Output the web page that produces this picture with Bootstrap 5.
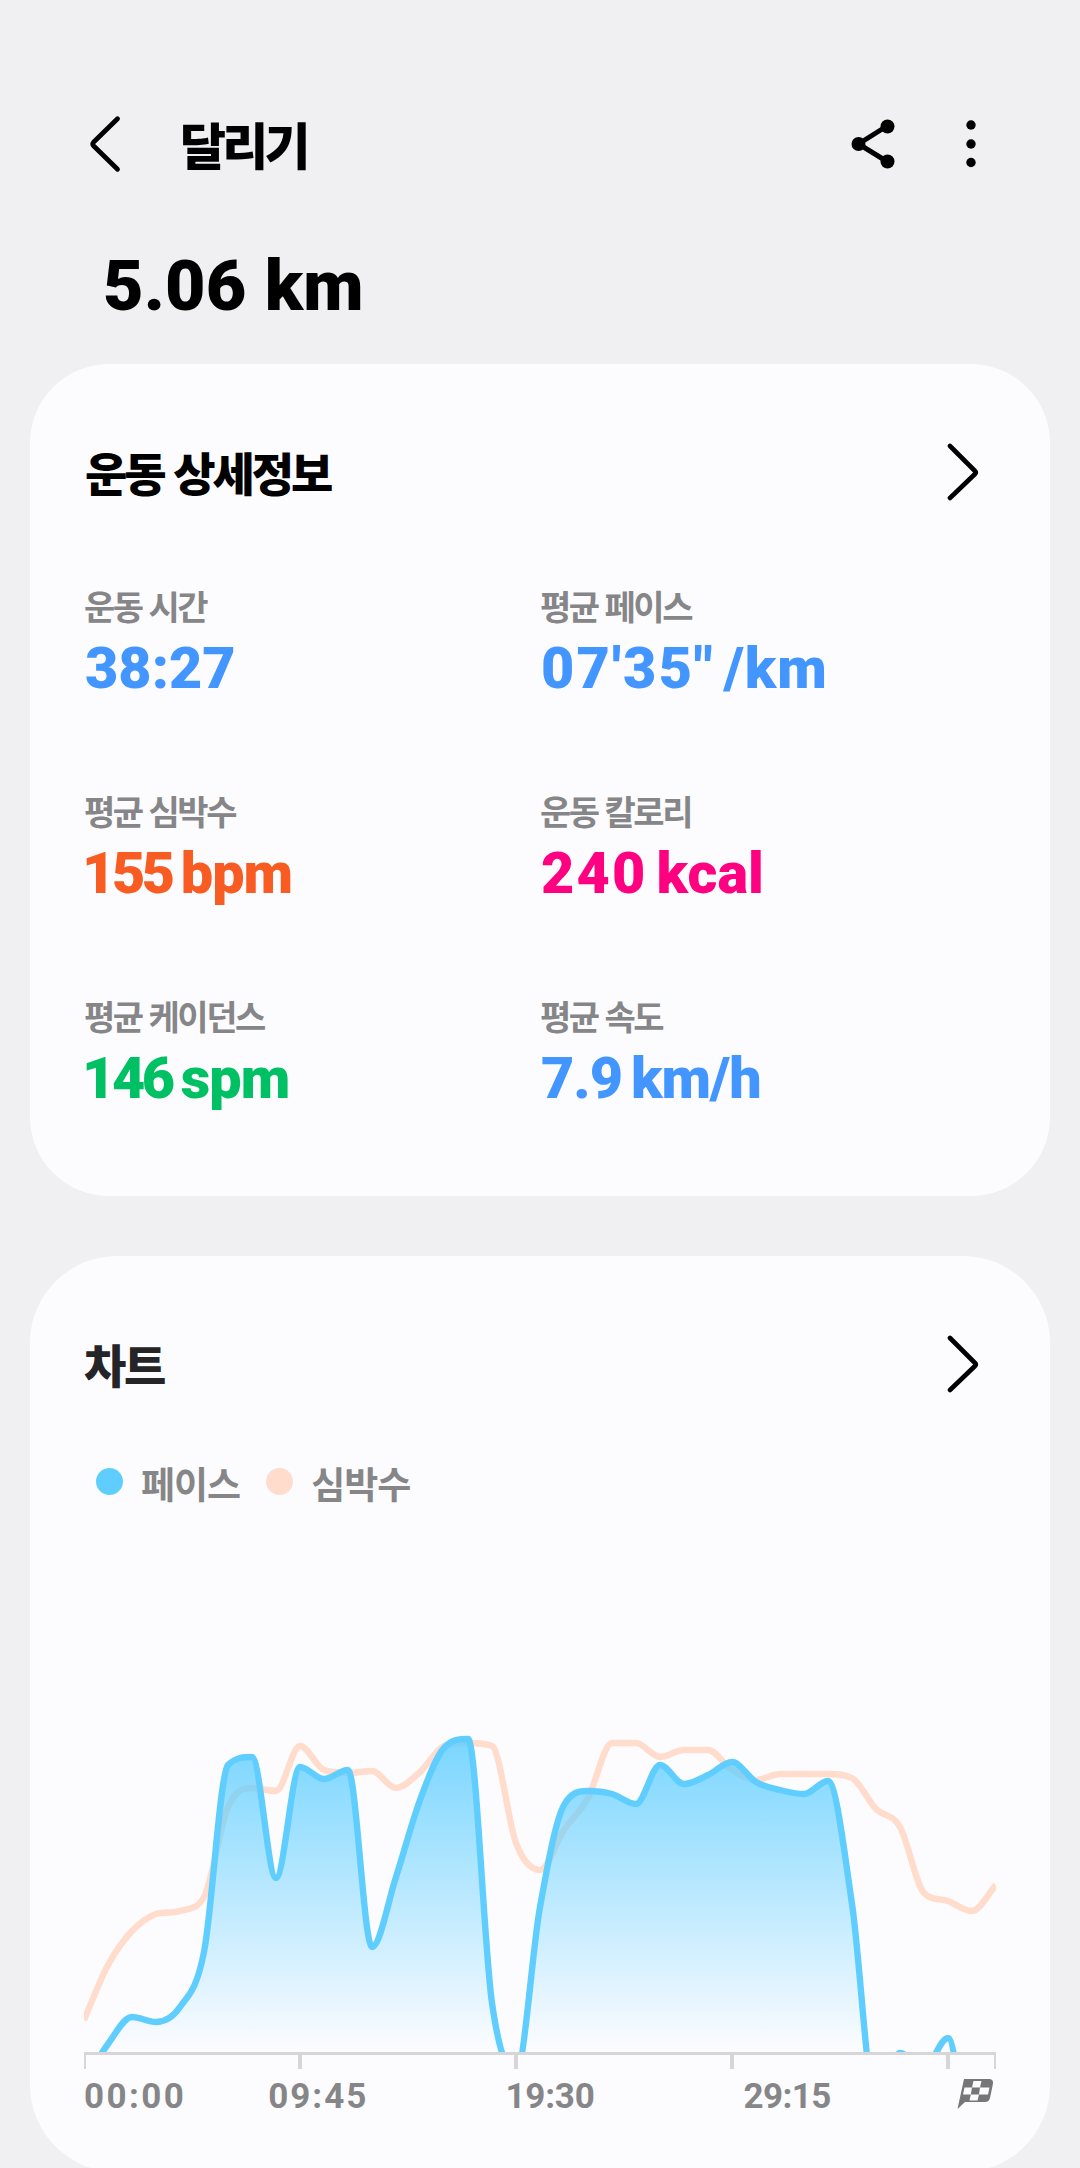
<!DOCTYPE html>
<html lang="ko">
<head>
<meta charset="utf-8">
<meta name="viewport" content="width=device-width, initial-scale=1">
<title>달리기</title>
<link href="https://cdn.jsdelivr.net/npm/bootstrap@5.3.0/dist/css/bootstrap.min.css" rel="stylesheet">
<style>
  html, body { height: 2168px; overflow: hidden; }
  body { background: #f0f0f3; color: #000; font-family: "Noto Sans CJK KR", sans-serif; }
  .screen { width: 1080px; height: 2168px; overflow: hidden; padding: 0 30px; }
  svg { display: block; flex: none; }

  .topbar { height: 88px; margin-top: 100px; padding: 0 69px 0 56px; }
  .topbar h1 { font-size: 50px; font-weight: 900; line-height: 60px; letter-spacing: -3.7px; margin: 0 0 2px 54px; }
  .share-icon { margin-right: 64px; }

  .num { font-family: Roboto, "Noto Sans CJK KR", sans-serif; font-weight: 900; white-space: nowrap; }
  .distance { height: 176px; padding: 63px 0 0 73px; font-size: 70px; line-height: 70px; letter-spacing: .1px; word-spacing: 1px; }

  .panel { background: #fcfcff; border: 0; }
  .panel-details { height: 832px; border-radius: 79px; padding: 77px 55px 0; }
  .panel-chart { height: 916px; border-radius: 87px; padding: 77px 54px 0; margin-top: 60px; }
  .panel h2 { font-size: 46px; font-weight: 900; line-height: 60px; letter-spacing: -3.1px; margin: 0; }
  .panel-head { height: 60px; padding-right: 14px; }
  .panel-chart .panel-head { padding-right: 15px; }
  .panel-chart h2 { color: #252527; letter-spacing: -2.4px; }

  .stats { margin: 85px -2px 0 0; row-gap: 105px; }
  .stat { height: 100px; width: 50%; }
  .stat-name { font-size: 34px; font-weight: 700; line-height: 40px; letter-spacing: -2.5px; color: #868688; margin-left: -1px; }
  .stat-value { font-size: 57.5px; line-height: 60px; gap: 9px; margin-top: 13px; }
  .ls-wide { letter-spacing: 2.2px; }
  .ls-unit { letter-spacing: 1px; }
  .ls-tight { letter-spacing: -3.4px; margin-left: -3px; }
  .ls-snug { letter-spacing: -1px; }
  .c-blue { color: #4396ff; } .c-orange { color: #f85c22; } .c-pink { color: #ff0080; } .c-green { color: #00c064; }

  .legend { margin-top: 61px; padding-left: 12px; height: 54px; font-size: 37px; font-weight: 700; line-height: 54px; letter-spacing: -1px; color: #868688; }
  .legend-text { margin: 3px 26px 0 18px; }
  .dot { width: 27px; height: 27px; border-radius: 50%; }
  .dot-pace { background: #5fceff; } .dot-heart { background: #ffdccb; }
  .plot { margin-top: 142px; }
  .axis-labels { height: 60px; color: #868688; font-size: 35px; line-height: 56px; letter-spacing: 2.4px; }
  .axis-labels .num { font-weight: 700; }
  .t1 { margin-left: 82px; letter-spacing: 2px; } .t2 { margin-left: 137px; letter-spacing: -.2px; } .t3 { margin-left: 149px; letter-spacing: -.6px; }
</style>
</head>
<body>
<main class="screen d-flex flex-column">
  <header class="topbar d-flex align-items-center flex-shrink-0">
    <svg width="40" height="60" viewBox="0 0 40 60" fill="none" stroke="#000" stroke-width="4.8" stroke-linecap="round" stroke-linejoin="round"><path d="M31.5 4.700L7.500 28.300Q6 30 7.500 31.700L31.500 55.300" /></svg>
    <h1>달리기</h1>
    <svg class="share-icon ms-auto" width="46" height="50" viewBox="0 0 46 50"><path d="M36 7L7.500 25L36 42.500" fill="none" stroke="#000" stroke-width="5"/><circle cx="7.500" cy="25" r="7"/><circle cx="36.500" cy="7.500" r="7"/><circle cx="36.500" cy="42.500" r="7"/></svg>
    <svg width="20" height="50" viewBox="0 0 20 50"><circle cx="10" cy="6" r="4.700"/><circle cx="10" cy="25" r="4.700"/><circle cx="10" cy="43.500" r="4.700"/></svg>
  </header>
  <div class="distance num flex-shrink-0">5.06 km</div>

  <section class="card panel panel-details flex-shrink-0">
    <div class="panel-head d-flex align-items-center justify-content-between">
      <h2>운동 상세정보</h2>
      <svg width="34" height="60" viewBox="0 0 34 60" fill="none" stroke="#000" stroke-width="4.600" stroke-linecap="round" stroke-linejoin="round"><path d="M3 5L28 30Q29.500 31.500 28 33L3 57"/></svg>
    </div>
    <div class="stats d-flex flex-wrap">
      <div class="stat"><div class="stat-name">운동 시간</div><div class="stat-value num d-flex c-blue"><span>38:27</span></div></div>
      <div class="stat"><div class="stat-name">평균 페이스</div><div class="stat-value num d-flex c-blue"><span class="ls-wide">07'35"</span><span class="ls-unit">/km</span></div></div>
      <div class="stat"><div class="stat-name">평균 심박수</div><div class="stat-value num d-flex c-orange"><span class="ls-tight">155</span><span class="ls-snug">bpm</span></div></div>
      <div class="stat"><div class="stat-name">운동 칼로리</div><div class="stat-value num d-flex c-pink"><span class="ls-wide">240</span><span>kcal</span></div></div>
      <div class="stat"><div class="stat-name">평균 케이던스</div><div class="stat-value num d-flex c-green"><span class="ls-tight">146</span><span class="ls-snug">spm</span></div></div>
      <div class="stat"><div class="stat-name">평균 속도</div><div class="stat-value num d-flex c-blue"><span class="ls-snug">7.9</span><span class="ls-snug">km/h</span></div></div>
    </div>
  </section>

  <section class="card panel panel-chart flex-shrink-0">
    <div class="panel-head d-flex align-items-center justify-content-between">
      <h2>차트</h2>
      <svg width="34" height="60" viewBox="0 0 34 60" fill="none" stroke="#000" stroke-width="4.600" stroke-linecap="round" stroke-linejoin="round"><path d="M3 5L28 30Q29.500 31.500 28 33L3 57"/></svg>
    </div>
    <div class="legend d-flex align-items-center">
      <span class="dot dot-pace"></span><span class="legend-text">페이스</span>
      <span class="dot dot-heart"></span><span class="legend-text">심박수</span>
    </div>
    <svg class="plot" width="912" height="419" viewBox="84 1650 912 419">
      <defs>
        <linearGradient id="fade" gradientUnits="userSpaceOnUse" x1="0" y1="1735" x2="0" y2="2052"><stop offset="0" stop-color="#5fceff" stop-opacity=".84"/><stop offset="1" stop-color="#5fceff" stop-opacity="0"/></linearGradient>
        <clipPath id="area"><rect x="84" y="1650" width="912" height="402"/></clipPath>
      </defs>
      <g clip-path="url(#area)" fill="none" stroke-width="6.4" stroke-linejoin="round">
        <path id="heart" stroke="#ffdccb"/>
        <path id="paceFill" fill="url(#fade)"/>
        <path id="pace" stroke="#5fceff"/>
      </g>
      <path fill="#d6d6d8" d="M84 2052H996V2069H994V2055H950V2069H946V2055H734V2069H730V2055H518V2069H514V2055H302V2069H298V2055H86V2069H84Z"/>
    </svg>
    <div class="axis-labels d-flex">
      <span class="num">00:00</span><span class="num t1">09:45</span><span class="num t2">19:30</span><span class="num t3">29:15</span>
      <svg class="ms-auto" width="42" height="44" viewBox="954 2069 42 44"><path d="M964 2079H989Q993.500 2079 993 2083.500L990 2098Q989 2102 985 2102H965L957.500 2109Z" fill="#767678"/><path fill="#fcfcff" d="M973.500 2081H981.500L980 2087.500H972ZM964.500 2087.500H972L970.800 2094.500H963ZM980 2087.500H989.500L988 2094.500H979ZM970.800 2094.500H979L977.500 2100.500H969.500Z"/></svg>
    </div>
  </section>
</main>
<script src="https://cdn.jsdelivr.net/npm/bootstrap@5.3.0/dist/js/bootstrap.bundle.min.js"></script>
<script>
  // One sample every 24 px, starting at the left end of the axis.
  const pace = [2082,2044,2017,2022,2007,1952,1765,1757,1878,1767,1779,1770,1947,1877,1800,1748,1739,2003,2072,1907,1805,1791,1794,1804,1765,1784,1775,1762,1782,1790,1794,1781,1904,2105,2053,2068,2038,2150,2150];
  const heart = [2020,1965,1931,1914,1911,1897,1807,1788,1791,1746,1770,1773,1771,1788,1772,1746,1743,1746,1843,1870,1830,1798,1743,1743,1757,1750,1750,1770,1780,1774,1774,1774,1778,1809,1827,1893,1901,1911,1885];
  // Monotone cubic curve through the samples.
  function curve(v) {
    const h = 24, s = v.slice(1).map((y, i) => (y - v[i]) / h);
    const m = v.map((_, i) => {
      if (i === 0) return s[0];
      if (i === v.length - 1) return s[i - 1];
      const a = s[i - 1], b = s[i];
      if (a * b <= 0) return 0;
      // Average slope, limited so that the curve does not overshoot.
      return Math.sign(a) * Math.min(Math.abs(a + b) / 2, 3 * Math.abs(a), 3 * Math.abs(b));
    });
    let d = `M84 ${v[0]}`;
    for (let i = 1; i < v.length; i++) {
      const x = 84 + i * h;
      d += `C${x - 16} ${v[i-1] + m[i-1] * 8} ${x - 8} ${v[i] - m[i] * 8} ${x} ${v[i]}`;
    }
    return d;
  }
  document.getElementById('heart').setAttribute('d', curve(heart));
  document.getElementById('pace').setAttribute('d', curve(pace));
  document.getElementById('paceFill').setAttribute('d', curve(pace) + 'V2200H84Z');
</script>
</body>
</html>
